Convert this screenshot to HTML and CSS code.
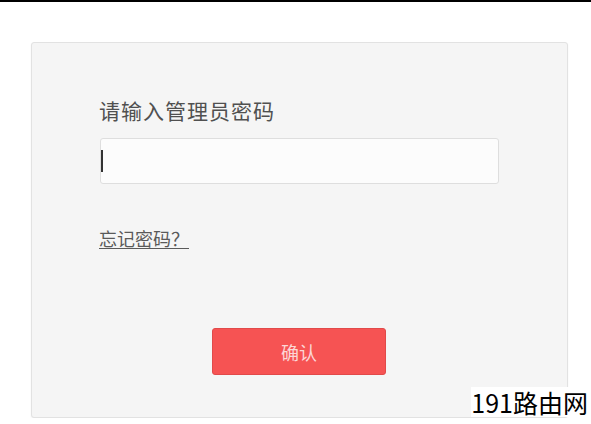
FILE: index.html
```html
<!DOCTYPE html>
<html>
  <head>
    <title>管理员登录</title>

    <link rel="stylesheet" href="styles.css">
  </head>
  <body>
    <div class="top-line"></div>
    <div class="login-block">
      <form>
        <label class="pwd-label">请输入管理员密码</label>
        <div class="pwd-field">
          <input type="password" class="pwd-input" name="password">
        </div>
        <a class="forget-link" href="#">忘记密码？</a>
        <div class="btn-row">
          <button type="button">确认</button>
        </div>
      </form>
      <div class="watermark">191路由网</div>
    </div>
  </body>
</html>
```

FILE: styles.css
```css
html, body {
min-height: 100%;
}
body, div, form, input, label, a, button {
padding: 0;
margin: 0;
outline: none;
font-family: "Noto Sans CJK SC", "Microsoft YaHei", sans-serif;
}
body {
background: #fff;
}
.top-line {
height: 2px;
background: #000;
}
.login-block {
position: relative;
width: 535px;
margin: 40px 0 0 31px;
border: 1px solid #e2e2e2;
border-radius: 3px;
background: #f5f5f5;
box-shadow: 0 1px 2px rgba(0, 0, 0, 0.05);
}
form {
display: flex;
flex-direction: column;
align-items: flex-start;
padding: 55px 0 42px 67px;
}
.pwd-label {
display: block;
height: 25px;
line-height: 25px;
font-size: 21px;
letter-spacing: 1px;
color: #505050;
}
.pwd-field {
position: relative;
margin-top: 15px;
margin-left: 1px;
}
.pwd-field::before {
content: "";
position: absolute;
left: 1px;
top: 12px;
width: 2px;
height: 22px;
background: #333;
}
.pwd-input {
display: block;
box-sizing: border-box;
width: 399px;
height: 46px;
border: 1px solid #dedede;
border-radius: 3px;
background: #fcfcfc;
}
.forget-link {
display: block;
margin-top: 42px;
height: 24px;
line-height: 24px;
font-size: 18px;
color: #5a5a5a;
text-decoration: underline;
text-underline-offset: 2px;
}
.btn-row {
margin-top: 78px;
margin-left: 113px;
}
button {
width: 174px;
height: 47px;
border: 1px solid #e14a4a;
border-radius: 3px;
background: #f65353;
font-size: 18px;
color: #fcd6d6;
}
.watermark {
position: absolute;
right: -21px;
bottom: 0;
font-size: 25px;
line-height: 30px;
color: #000;
background: #fff;
}
```
